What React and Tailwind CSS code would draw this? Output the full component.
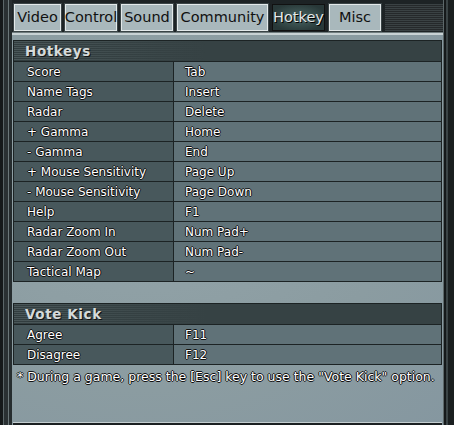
import React from 'react'

const tabs = [
  { label: 'Video', w: 'w-[47px]' },
  { label: 'Control', w: 'w-[52px]' },
  { label: 'Sound', w: 'w-[52px]' },
  { label: 'Community', w: 'w-[91px]' },
  { label: 'Hotkey', w: 'w-[53px]', active: true },
  { label: 'Misc', w: 'w-[52px]' },
]

const hotkeys = [
  ['Score', 'Tab'],
  ['Name Tags', 'Insert'],
  ['Radar', 'Delete'],
  ['+ Gamma', 'Home'],
  ['- Gamma', 'End'],
  ['+ Mouse Sensitivity', 'Page Up'],
  ['- Mouse Sensitivity', 'Page Down'],
  ['Help', 'F1'],
  ['Radar Zoom In', 'Num Pad+'],
  ['Radar Zoom Out', 'Num Pad-'],
  ['Tactical Map', '~'],
]

const voteKick = [
  ['Agree', 'F11'],
  ['Disagree', 'F12'],
]

const outline = '[text-shadow:1px_0_0_#111,-1px_0_0_#111,0_1px_0_#111,0_-1px_0_#111]'

function Section({ title, rows }) {
  return (
    <div className="border border-[#1c2324] bg-[#1c2324] flex flex-col gap-[1px]">
      <div className="h-[20px] flex items-center pl-[11px] bg-[linear-gradient(to_right,rgba(54,66,68,0)_0%,#364244_45%),repeating-linear-gradient(to_bottom,#4a5759_0px,#4a5759_1px,#323d3f_1px,#323d3f_2px)] bg-[#364244]">
        <span className="text-[13.5px] font-bold tracking-[0.6px] text-[#d5dada] [text-shadow:1px_1px_0_#111]">{title}</span>
      </div>
      {rows.map(([name, key]) => (
        <div key={name} className="h-[19px] flex gap-[1px]">
          <div className={`w-[159px] bg-[#48585c] flex items-center pl-[13px] text-[12px] text-white ${outline}`}>
            {name}
          </div>
          <div className={`flex-1 bg-[#607278] flex items-center pl-[11px] text-[12px] text-white ${outline}`}>
            {key}
          </div>
        </div>
      ))}
    </div>
  )
}

export default function App() {
  return (
    <div className="w-[454px] h-[425px] bg-[#1b2022] flex overflow-hidden font-['DejaVu_Sans',sans-serif]">
      <div className="w-[12px] h-full flex">
        <div className="w-[3px] bg-[#15191a]" />
        <div className="w-[1px] bg-[#5b6769]" />
        <div className="w-[4px] bg-[#2a3133]" />
        <div className="w-[1px] bg-[#6b7779]" />
        <div className="w-[3px] bg-[#262d2f]" />
      </div>

      <div className="w-[431px] h-full flex flex-col">
        <div className="h-[4px] bg-[#1d2325]" />
        <div className="h-[28px] flex gap-[4px] pl-[2px] bg-[#1d2325]">
          {tabs.map(t => (
            <div
              key={t.label}
              className={`${t.w} h-[27px] flex items-center justify-center border text-[14.5px] ${
                t.active
                  ? 'border-[#111] bg-[radial-gradient(ellipse_at_center,#4a6664_0%,#283838_80%)] text-[#e4e8e8] [text-shadow:1px_1px_0_#000]'
                  : 'border-[#e3e9ea] bg-[#a9b8bc] text-[#111] outline outline-1 outline-[#3a4446]'
              }`}
            >
              {t.label}
            </div>
          ))}
          <div className="flex-1 h-[27px] bg-[repeating-linear-gradient(to_bottom,#3a4244_0px,#3a4244_1px,#25292b_1px,#25292b_2px)]" />
        </div>
        <div className="h-[1px] bg-[#707c7e]" />
        <div className="h-[2px] bg-[#c8d2d4]" />
        <div className="flex-1 bg-[#8d9ea3] bg-[radial-gradient(ellipse_at_30%_40%,#93a4a9_0%,#8b9ca1_60%,#8597a0_100%)] pl-[1px] pr-[1px] pt-[5px] flex flex-col">
          <Section title="Hotkeys" rows={hotkeys} />
          <div className="h-[21px]" />
          <Section title="Vote Kick" rows={voteKick} />
          <div className={`mt-[3px] pl-[4px] text-[12.5px] text-white whitespace-nowrap ${outline}`}>
            * During a game, press the [Esc] key to use the "Vote Kick" option.
          </div>
          <div className="flex-1" />
          <div className="h-[1px] bg-[#c4ced0]" />
          <div className="h-[2px] bg-[#1b2022]" />
        </div>
      </div>

      <div className="flex-1 h-full flex">
        <div className="w-[1px] bg-[#5d686a]" />
        <div className="w-[2px] bg-[#15191a]" />
        <div className="w-[2px] bg-[#3b4446]" />
        <div className="flex-1 bg-[#1a1f20]" />
      </div>
    </div>
  )
}
